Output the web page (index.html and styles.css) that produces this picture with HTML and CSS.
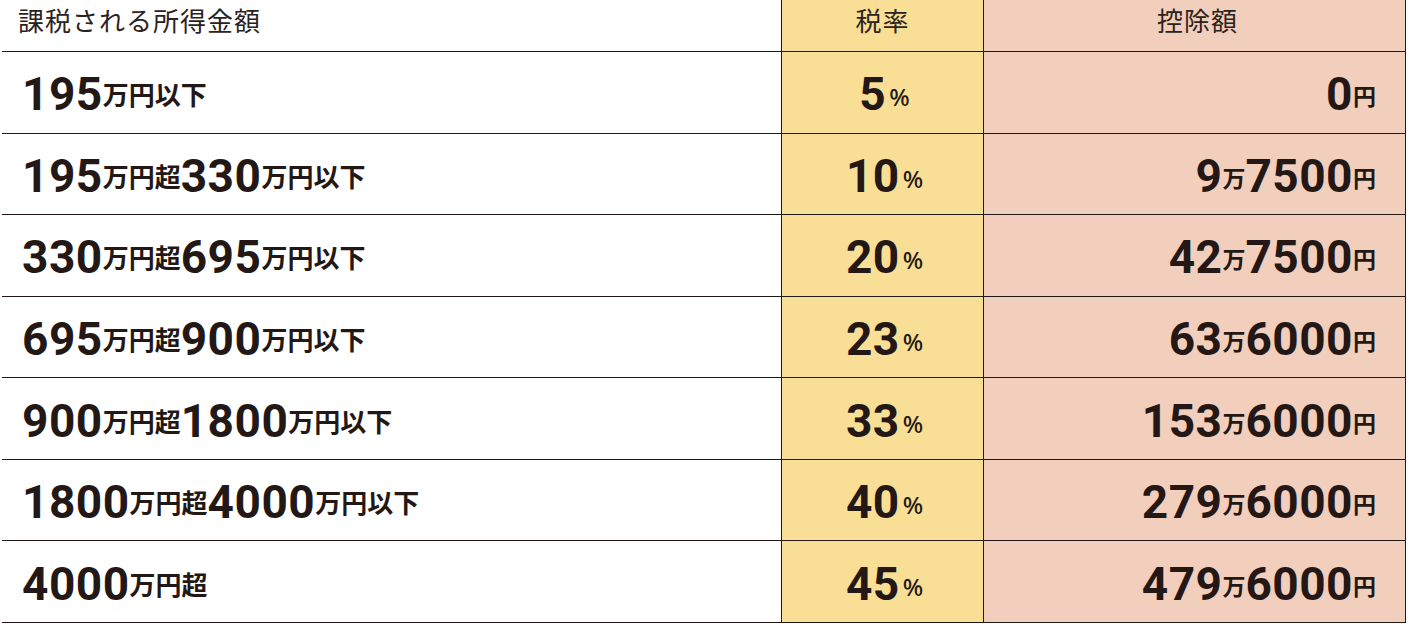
FILE: index.html
```html
<!DOCTYPE html>
<html lang="ja">
<head>
<meta charset="utf-8">
<link rel="stylesheet" href="styles.css">
</head>
<body>
<div class="table">
  <div class="cell head c1">課税される所得金額</div>
  <div class="cell head c2">税率</div>
  <div class="cell head c3">控除額</div>

  <div class="cell c1"><span class="n">195</span><span class="u">万円以下</span></div>
  <div class="cell c2"><span class="n">5</span><span class="p">%</span></div>
  <div class="cell c3"><span class="n">0</span><span class="u s">円</span></div>

  <div class="cell c1"><span class="n">195</span><span class="u">万円超</span><span class="n">330</span><span class="u">万円以下</span></div>
  <div class="cell c2"><span class="n">10</span><span class="p">%</span></div>
  <div class="cell c3"><span class="n">9</span><span class="u s">万</span><span class="n">7500</span><span class="u s">円</span></div>

  <div class="cell c1"><span class="n">330</span><span class="u">万円超</span><span class="n">695</span><span class="u">万円以下</span></div>
  <div class="cell c2"><span class="n">20</span><span class="p">%</span></div>
  <div class="cell c3"><span class="n">42</span><span class="u s">万</span><span class="n">7500</span><span class="u s">円</span></div>

  <div class="cell c1"><span class="n">695</span><span class="u">万円超</span><span class="n">900</span><span class="u">万円以下</span></div>
  <div class="cell c2"><span class="n">23</span><span class="p">%</span></div>
  <div class="cell c3"><span class="n">63</span><span class="u s">万</span><span class="n">6000</span><span class="u s">円</span></div>

  <div class="cell c1"><span class="n">900</span><span class="u">万円超</span><span class="n">1800</span><span class="u">万円以下</span></div>
  <div class="cell c2"><span class="n">33</span><span class="p">%</span></div>
  <div class="cell c3"><span class="n">153</span><span class="u s">万</span><span class="n">6000</span><span class="u s">円</span></div>

  <div class="cell c1"><span class="n">1800</span><span class="u">万円超</span><span class="n">4000</span><span class="u">万円以下</span></div>
  <div class="cell c2"><span class="n">40</span><span class="p">%</span></div>
  <div class="cell c3"><span class="n">279</span><span class="u s">万</span><span class="n">6000</span><span class="u s">円</span></div>

  <div class="cell c1"><span class="n">4000</span><span class="u">万円超</span></div>
  <div class="cell c2"><span class="n">45</span><span class="p">%</span></div>
  <div class="cell c3"><span class="n">479</span><span class="u s">万</span><span class="n">6000</span><span class="u s">円</span></div>
</div>
</body>
</html>
```

FILE: styles.css
```css
html, body {
  margin: 0;
  padding: 0;
  background: #ffffff;
}
body {
  color: #231815;
  font-family: "Noto Sans CJK JP", sans-serif;
}
.table {
  margin-left: 2px;
  width: 1404px;
  height: 623px;
  display: grid;
  grid-template-columns: 780px 202px 422px;
  grid-template-rows: 52px repeat(7, 1fr);
}
.cell {
  box-sizing: border-box;
  border-bottom: 1px solid #231815;
  display: flex;
  align-items: center;
  white-space: nowrap;
}
.c1 {
  border-right: 1px solid #231815;
  padding-left: 20px;
}
.c2 {
  background: #f8df95;
  border-right: 1px solid #231815;
  justify-content: center;
  padding-left: 4px;
}
.c3 {
  background: #f2cebc;
  border-right: 1px solid #231815;
  justify-content: flex-end;
  padding-right: 29px;
}
.head {
  font-size: 26px;
  font-weight: 400;
  letter-spacing: 1px;
  padding-bottom: 13px;
  color: #2a2220;
}
.head.c1 { padding-left: 16px; }
.head.c2 { padding-left: 0; }
.head.c3 { justify-content: center; padding-right: 0; padding-left: 6px; }
.cell:not(.head) {
  padding-top: 4px;
  align-items: baseline;
  align-content: center;
  flex-wrap: wrap;
}
.n {
  font-family: Roboto, "Liberation Sans", sans-serif;
  font-weight: 700;
  font-size: 46px;
  letter-spacing: 0.5px;
  line-height: 1;
}
.u {
  font-family: "Noto Sans CJK JP", sans-serif;
  font-weight: 700;
  font-size: 26px;
  line-height: 1;
  position: relative;
  top: -5px;
}
.u.s {
  font-size: 23px;
  top: -5px;
}
.p {
  font-family: "Noto Sans", sans-serif;
  font-weight: 500;
  font-size: 24px;
  line-height: 1;
  margin-left: 3px;
  position: relative;
  top: -4px;
}
```
